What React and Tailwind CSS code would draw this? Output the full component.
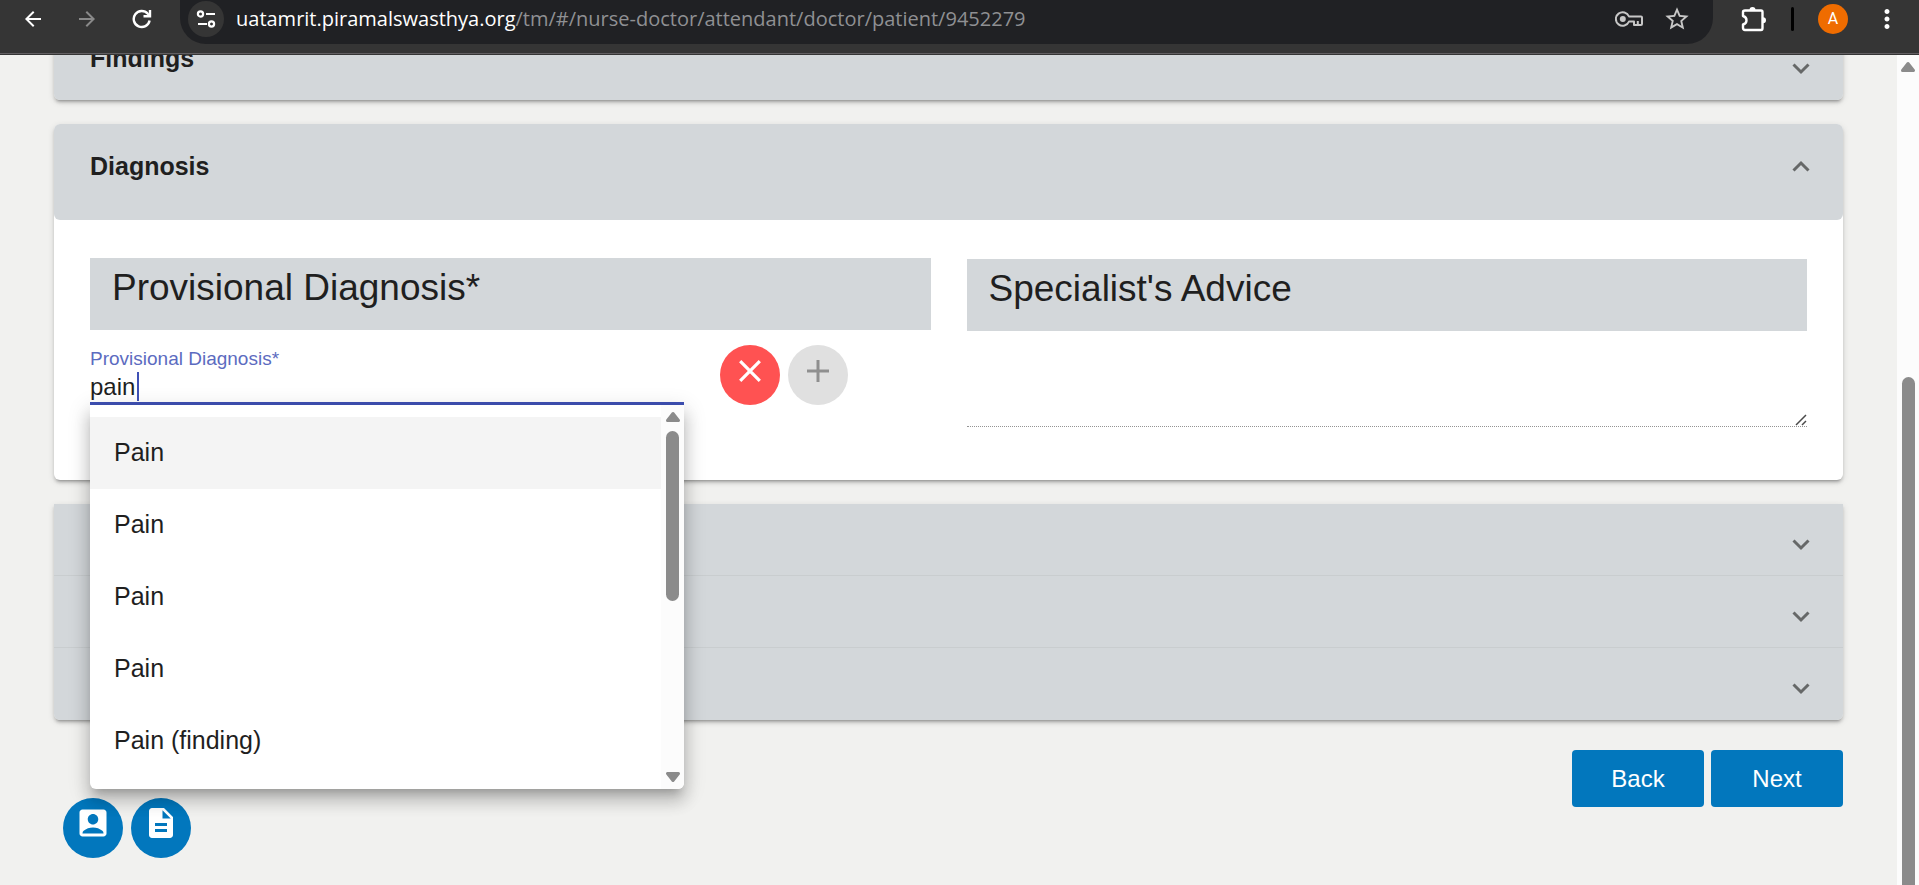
import React, { useState } from 'react';
import {
  MdAccountBox,
  MdArrowBack,
  MdArrowForward,
  MdDescription,
  MdMoreVert,
  MdStarBorder,
} from 'react-icons/md';

const suggestions = ['Pain', 'Pain', 'Pain', 'Pain', 'Pain (finding)'];

const panelShadow =
  'shadow-[0_4px_2px_-3px_rgba(0,0,0,0.2),0_3px_3px_0_rgba(0,0,0,0.14),0_2px_7px_0_rgba(0,0,0,0.12)]';

const Chevron = ({ up = false }) => (
  <svg viewBox="0 0 18 12" className="h-3 w-[18px] shrink-0 text-[#666868]" fill="none" stroke="currentColor" strokeWidth="3">
    <path d={up ? 'M1.5 10.5 L9 3 L16.5 10.5' : 'M1.5 1.5 L9 9 L16.5 1.5'} />
  </svg>
);

const Triangle = ({ down = false }) => (
  <svg viewBox="0 0 16 12" className={down ? 'h-3 w-4 rotate-180' : 'h-3 w-4'} fill="#8b8b8b" stroke="#8b8b8b" strokeWidth="3" strokeLinejoin="round">
    <path d="M8 2.5 L13.5 9.5 H2.5 Z" />
  </svg>
);

const ReloadIcon = () => (
  <svg viewBox="0 0 20 20" className="size-5" fill="none" stroke="currentColor" strokeWidth="2.4">
    <path d="M17.6 11.5 A8 8 0 1 1 15.8 4.8 L17.5 6.5" />
    <path d="M18 1 V7.2 H11.5" />
  </svg>
);

const KeyIcon = () => (
  <svg viewBox="0 0 28 16" className="h-4 w-7" fill="none" stroke="currentColor" strokeWidth="2">
    <path d="M14 5.5 A6.8 6.8 0 1 0 14 10.5 H19 V14 H26 Q27 14 27 13 V6.5 Q27 5.5 26 5.5 Z" strokeLinejoin="round" />
    <path d="M22.8 14 V10" />
    <circle cx="7.8" cy="8" r="3" fill="currentColor" stroke="none" />
  </svg>
);

const PuzzleIcon = () => (
  <svg viewBox="0 0 26 26" className="size-[26px]" fill="none" stroke="currentColor" strokeWidth="2.4" strokeLinejoin="round">
    <path d="M4 4.5 H20 Q21.5 4.5 21.5 6 V22 Q21.5 24 20 24 H4 Q2 24 2 22 V18.5 Q5.5 17.5 5.5 14.2 Q5.5 11 2 10 V6 Q2 4.5 4 4.5 Z" />
    <path d="M8.5 4 A3 3 0 0 1 14.5 4 Z M22 11.2 A3 3 0 0 1 22 17.2 Z" fill="currentColor" stroke="none" />
  </svg>
);

const TuneIcon = () => (
  <svg viewBox="0 0 20 20" className="size-5" fill="none" stroke="currentColor" strokeWidth="2.2">
    <circle cx="4.5" cy="5" r="2.6" />
    <path d="M10 5 H19 M2 15 H11" />
    <circle cx="15.5" cy="15" r="2.6" />
  </svg>
);

const BrowserBar = () => (
  <header className="flex h-[55px] shrink-0 items-start overflow-hidden border-b border-[#353535] bg-[#353535] text-white shadow-[inset_0_-1px_#625f62]">
    <nav className="flex h-[38px] items-center gap-[30px] pl-[21px]">
      <button type="button" aria-label="Back"><MdArrowBack className="size-6" /></button>
      <button type="button" aria-label="Forward" className="text-[#8a8a8a]"><MdArrowForward className="size-6" /></button>
      <button type="button" aria-label="Reload" className="flex w-[26px] justify-center"><ReloadIcon /></button>
    </nav>

    <div className="ml-[25px] flex h-11 flex-1 items-start rounded-b-[26px] bg-[#202124]">
      <div className="flex h-[38px] flex-1 items-center pl-2">
        <button type="button" aria-label="Site information" className="flex size-9 items-center justify-center rounded-full bg-[#353535]">
          <TuneIcon />
        </button>
        <p className="ml-3 flex-1 font-['Open_Sans',sans-serif] text-xl text-[#8f9093]">
          <span className="text-white">uatamrit.piramalswasthya.org</span>/tm/#/nurse-doctor/attendant/doctor/patient/9452279
        </p>
        <div className="flex items-center gap-5 pr-[22px] text-[#c7c7c7]">
          <button type="button" aria-label="Passwords"><KeyIcon /></button>
          <button type="button" aria-label="Bookmark"><MdStarBorder className="size-7" /></button>
        </div>
      </div>
    </div>

    <div className="flex h-[38px] items-center pr-[17px] pl-7">
      <button type="button" aria-label="Extensions"><PuzzleIcon /></button>
      <span className="ml-6 h-6 w-[3px] rounded bg-black" />
      <button type="button" className="ml-6 flex size-[30px] items-center justify-center rounded-full bg-[#ef6c00] font-[Roboto,sans-serif] text-base">A</button>
      <button type="button" aria-label="Menu" className="ml-6"><MdMoreVert className="size-[30px]" /></button>
    </div>
  </header>
);

const CollapsedPanel = ({ title }) => (
  <button type="button" aria-label={title || 'Expand section'} className="flex h-[72px] w-full items-center justify-between border-b border-[#c9cdcf] bg-[#d3d7da] pr-[33px] pl-9 text-left last:border-0">
    <span className="pb-2.5 text-[25px] font-bold">{title}</span>
    <span className="pt-2.5"><Chevron /></span>
  </button>
);

const DiagnosisField = () => {
  const [value, setValue] = useState('pain');

  return (
    <div className="relative mt-px w-[594px]">
      <label htmlFor="diagnosis" className="block text-[19px] leading-[26px] text-[#5c6bc0]">Provisional Diagnosis*</label>
      <div className="relative border-b-[3px] border-[#3f51b5]">
        <input
          id="diagnosis"
          value={value}
          onChange={(e) => setValue(e.target.value)}
          className="block h-[30px] w-full bg-transparent text-2xl caret-transparent outline-none"
        />
        <span className="absolute top-0 left-[47px] h-[29px] w-0.5 bg-[#3f51b5]" />
      </div>

      {/* Autocomplete panel */}
      <div className="absolute top-full left-0 z-10 flex h-96 w-full overflow-hidden rounded-b-md bg-white shadow-[0_8px_8px_-5px_rgba(0,0,0,0.2),0_12px_15px_2px_rgba(0,0,0,0.14),0_5px_21px_3px_rgba(0,0,0,0.12)]">
        <ul role="listbox" aria-label="Suggestions" className="flex-1 pt-3">
          {suggestions.map((item, i) => (
            <li
              key={i}
              role="option"
              aria-selected={i === 0}
              className={i === 0 ? 'flex h-[72px] items-center bg-[#f4f4f4] px-6 text-[25px]' : 'flex h-[72px] items-center px-6 text-[25px]'}
            >
              {item}
            </li>
          ))}
        </ul>
        <div className="flex w-[23px] flex-col items-center bg-[#fcfcfc] py-1.5">
          <Triangle />
          <div className="mt-2 h-[170px] w-[13px] rounded-full bg-[#8b8b8b]" />
          <div className="mt-auto"><Triangle down /></div>
        </div>
      </div>
    </div>
  );
};

const SectionHeading = ({ children }) => (
  <h2 className="h-[72px] bg-[#d3d7da] px-[22px] pt-2 text-[37px] leading-[44px]">{children}</h2>
);

const DiagnosisPanel = () => (
  <section className={`mt-6 rounded-md bg-white ${panelShadow}`}>
    <button type="button" className="flex h-24 w-full items-center justify-between rounded-md bg-[#d3d7da] pr-[33px] pb-3 pl-9">
      <span className="pt-0.5 text-[25px] font-bold">Diagnosis</span>
      <Chevron up />
    </button>
    <div className="grid grid-cols-2 gap-9 px-9 pt-[38px] pb-[53px]">
      <div>
        <SectionHeading>Provisional Diagnosis*</SectionHeading>
        <div className="flex gap-9 pt-[15px]">
          <DiagnosisField />
          <div className="flex gap-2">
            <button type="button" aria-label="Remove diagnosis" className="flex size-[60px] justify-center rounded-full bg-[#ff5252] pt-[15px]">
              <svg viewBox="0 0 22 22" className="size-[22px]" stroke="#fff" strokeWidth="3.2">
                <path d="M1.2 1.2 L20.8 20.8 M20.8 1.2 L1.2 20.8" />
              </svg>
            </button>
            <button type="button" disabled aria-label="Add diagnosis" className="flex size-[60px] justify-center rounded-full bg-[#e0e0e0] pt-[15px]">
              <svg viewBox="0 0 22 22" className="size-[22px]" stroke="#8f8f8f" strokeWidth="3">
                <path d="M11 0 V22 M0 11 H22" />
              </svg>
            </button>
          </div>
        </div>
      </div>
      <div className="pt-px">
        <SectionHeading>Specialist's Advice</SectionHeading>
        <div className="relative mt-6">
          <textarea aria-label="Specialist's Advice" className="block h-[72px] w-full resize-none border-b border-dotted border-[#949494] text-2xl outline-none" />
          <svg viewBox="0 0 12 12" className="absolute right-0 bottom-px size-3" stroke="#4a4a4a" strokeWidth="1.5">
            <path d="M1 11 L11 1 M7 11 L11 7" />
          </svg>
        </div>
      </div>
    </div>
  </section>
);

const App = () => (
  <div className="flex h-screen flex-col overflow-hidden bg-[#f1f1ef] font-['Liberation_Sans',Arial,sans-serif] text-[#1f1f1f]">
    <BrowserBar />
    <div className="flex min-h-0 flex-1">
      <main className="flex-1 overflow-hidden px-[54px]">
        <div className={`-mt-[27px] overflow-hidden rounded-md ${panelShadow}`}>
          <CollapsedPanel title="Findings" />
        </div>

        <DiagnosisPanel />

        <div className={`mt-6 overflow-hidden rounded-b-md ${panelShadow}`}>
          <CollapsedPanel />
          <CollapsedPanel />
          <CollapsedPanel />
        </div>

        <div className="mt-[30px] flex justify-end gap-[7px] text-2xl text-white">
          <button type="button" className="h-[57px] w-[132px] rounded bg-[#0277bd]">Back</button>
          <button type="button" className="h-[57px] w-[132px] rounded bg-[#0277bd]">Next</button>
        </div>

        <div className="-mt-[9px] flex gap-2 pl-[9px] text-white">
          <button type="button" aria-label="Patient profile" className="flex size-[60px] justify-center rounded-full bg-[#0277bd] pt-[7px]">
            <MdAccountBox className="size-9" />
          </button>
          <button type="button" aria-label="Case sheet" className="flex size-[60px] justify-center rounded-full bg-[#0277bd] pt-[7px]">
            <MdDescription className="size-9" />
          </button>
        </div>
      </main>

      {/* Page scrollbar */}
      <div className="flex w-[22px] flex-col items-center bg-[#fcfcfc] pt-1.5">
        <Triangle />
        <div className="mt-[304px] w-[13px] flex-1 rounded-t-full bg-[#8b8b8b]" />
      </div>
    </div>
  </div>
);

export default App;
